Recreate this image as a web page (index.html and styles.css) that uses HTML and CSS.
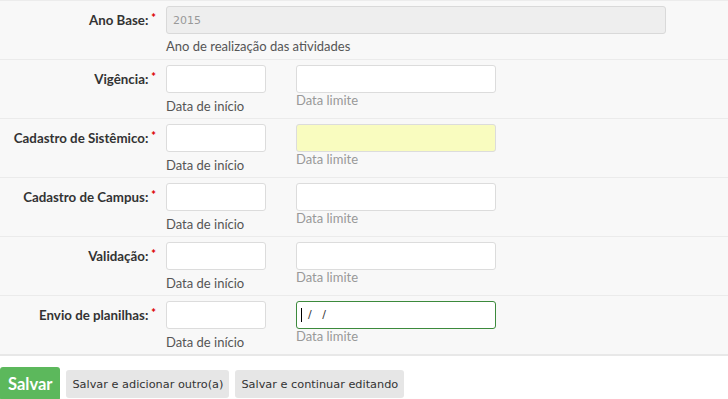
FILE: index.html
```html
<!DOCTYPE html>
<html lang="pt-br">
<head>
  <meta charset="UTF-8" />
  <title>Calendário</title>
  <link rel="stylesheet" href="styles.css">
</head>
<body>
  <form class="form-painel">
    <div class="linha">
      <label class="rotulo">Ano Base:<span class="obrig">*</span></label>
      <div class="campo">
        <input type="text" class="input-ano" value="2015" disabled />
        <p class="ajuda">Ano de realização das atividades</p>
      </div>
    </div>

    <div class="linha">
      <label class="rotulo">Vigência:<span class="obrig">*</span></label>
      <div class="campo datas">
        <div class="data">
          <input type="text" class="input-inicio" />
          <span class="legenda-inicio">Data de início</span>
        </div>
        <div class="data">
          <input type="text" class="input-limite" />
          <span class="legenda-limite">Data limite</span>
        </div>
      </div>
    </div>

    <div class="linha">
      <label class="rotulo">Cadastro de Sistêmico:<span class="obrig">*</span></label>
      <div class="campo datas">
        <div class="data">
          <input type="text" class="input-inicio" />
          <span class="legenda-inicio">Data de início</span>
        </div>
        <div class="data">
          <input type="text" class="input-limite amarelo" />
          <span class="legenda-limite">Data limite</span>
        </div>
      </div>
    </div>

    <div class="linha">
      <label class="rotulo">Cadastro de Campus:<span class="obrig">*</span></label>
      <div class="campo datas">
        <div class="data">
          <input type="text" class="input-inicio" />
          <span class="legenda-inicio">Data de início</span>
        </div>
        <div class="data">
          <input type="text" class="input-limite" />
          <span class="legenda-limite">Data limite</span>
        </div>
      </div>
    </div>

    <div class="linha">
      <label class="rotulo">Validação:<span class="obrig">*</span></label>
      <div class="campo datas">
        <div class="data">
          <input type="text" class="input-inicio" />
          <span class="legenda-inicio">Data de início</span>
        </div>
        <div class="data">
          <input type="text" class="input-limite" />
          <span class="legenda-limite">Data limite</span>
        </div>
      </div>
    </div>

    <div class="linha">
      <label class="rotulo">Envio de planilhas:<span class="obrig">*</span></label>
      <div class="campo datas">
        <div class="data">
          <input type="text" class="input-inicio" />
          <span class="legenda-inicio">Data de início</span>
        </div>
        <div class="data">
          <div class="input-limite focado"><span class="cursor"></span>/&nbsp;&nbsp;&nbsp;/</div>
          <span class="legenda-limite">Data limite</span>
        </div>
      </div>
    </div>
  </form>

  <div class="acoes">
    <button class="btn-salvar">Salvar</button>
    <button class="btn-cinza">Salvar e adicionar outro(a)</button>
    <button class="btn-cinza">Salvar e continuar editando</button>
  </div>
</body>
</html>
```

FILE: styles.css
```css
* { box-sizing: border-box; }

body {
  margin: 0;
  font-family: 'Lato', sans-serif;
  background: #fff;
  color: #333;
}

.form-painel {
  background-color: #f8f8f8;
  border-top: 1px solid #ececec;
  border-bottom: 2px solid #e8e8e8;
  width: 728px;
}

.linha {
  display: flex;
  height: 59px;
  padding-top: 5px;
  border-top: 1px solid #ebebeb;
}

.linha:first-child {
  border-top: none;
  height: 58px;
}

.rotulo {
  width: 156px;
  text-align: right;
  font-size: 13.3px;
  font-weight: 700;
  line-height: 16px;
  padding-top: 6px;
  color: #333;
}

.obrig {
  color: #d00;
  font-size: 11px;
  font-weight: 900;
  vertical-align: top;
  margin-left: 3px;
  position: relative;
  top: -2px;
}

.campo {
  margin-left: 10px;
}

.input-ano {
  display: block;
  width: 500px;
  height: 28px;
  border: 1px solid #d9d9d9;
  border-radius: 3px;
  background: #eeeeee;
  color: #999;
  font-family: 'DejaVu Sans', sans-serif;
  font-size: 11px;
  padding: 0 6px;
}

.ajuda {
  margin: 4px 0 0;
  font-size: 13px;
  line-height: 16px;
  color: #555;
}

.datas {
  display: flex;
  gap: 30px;
}

.data {
  display: flex;
  flex-direction: column;
}

.data input,
.input-limite {
  height: 28px;
  border: 1px solid #dcdcdc;
  border-radius: 3px;
  background: #fff;
}

.input-inicio { width: 100px; }
.input-limite { width: 200px; }

.data input.amarelo { background: #f9fcbf; }

.focado {
  border-color: #3c8a3c;
  font-family: 'DejaVu Sans', sans-serif;
  font-size: 11px;
  line-height: 26px;
  padding-left: 4px;
  color: #333;
}

.cursor {
  display: inline-block;
  width: 1px;
  height: 14px;
  background: #000;
  vertical-align: middle;
  margin-right: 6px;
}

.legenda-inicio {
  margin-top: 5px;
  font-size: 13px;
  line-height: 16px;
  color: #555;
}

.legenda-limite {
  margin-top: -1px;
  font-size: 13px;
  line-height: 16px;
  color: #999;
}

.acoes {
  display: flex;
  align-items: center;
  gap: 6px;
  margin-top: 11px;
}

.btn-salvar {
  background-color: #5cb85c;
  color: #fff;
  border: none;
  border-radius: 3px;
  font-family: 'Lato', sans-serif;
  font-weight: 700;
  font-size: 16.5px;
  height: 34px;
  padding: 0 8px;
}

.btn-cinza {
  background-color: #e6e6e6;
  color: #333;
  border: none;
  border-radius: 3px;
  font-family: 'DejaVu Sans', sans-serif;
  font-size: 11.3px;
  height: 28px;
  padding: 0 6px;
}
```
